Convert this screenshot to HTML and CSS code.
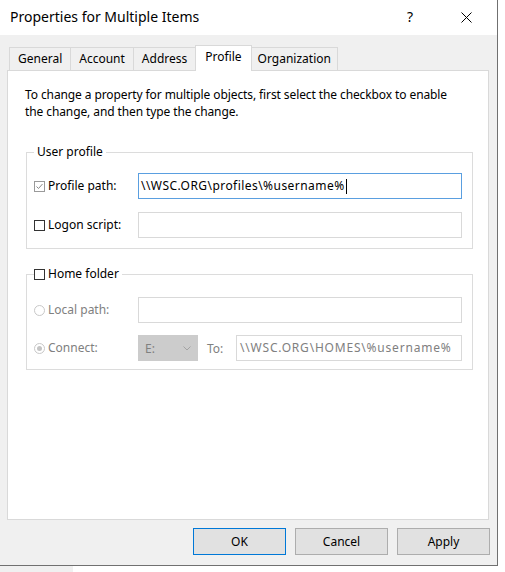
FILE: index.html
```html
<!DOCTYPE html>
<html lang="en">
<head>
<meta charset="utf-8">
<title>Properties for Multiple Items</title>
<link rel="stylesheet" href="styles.css">
</head>
<body>
<div class="window">
  <div class="titlebar">
    <span class="title">Properties for Multiple Items</span>
    <span class="help">?</span>
    <span class="close">
      <svg width="11" height="11" viewBox="0 0 11 11"><path d="M0.5 0.5 L10.5 10.5 M10.5 0.5 L0.5 10.5" stroke="#000" stroke-width="1" fill="none"/></svg>
    </span>
  </div>

  <div class="tabs">
    <div class="tab">General</div>
    <div class="tab">Account</div>
    <div class="tab">Address</div>
    <div class="tab tab--active">Profile</div>
    <div class="tab tab--narrow">Organization</div>
  </div>

  <div class="panel">
    <p class="desc">To change a property for multiple objects, first select the checkbox to enable<br>the change, and then type the change.</p>

    <fieldset class="group group--user">
      <legend class="group-title">User profile</legend>
      <div class="row">
        <label class="field-label">
          <span class="check check--on"><svg width="9" height="9" viewBox="0 0 9 9"><path d="M1.5 4.5 L3.5 6.5 L7.5 2" stroke="#8a8a8a" stroke-width="1" fill="none"/></svg></span>
          Profile path:
        </label>
        <div class="textbox textbox--focus">\\WSC.ORG\profiles\%username%<span class="caret"></span></div>
      </div>
      <div class="row">
        <label class="field-label">
          <span class="check"></span>
          Logon script:
        </label>
        <div class="textbox"></div>
      </div>
    </fieldset>

    <fieldset class="group group--home">
      <legend class="group-title group-title--check"><span class="check"></span>Home folder</legend>
      <div class="row">
        <label class="field-label field-label--disabled">
          <span class="radio"></span>
          Local path:
        </label>
        <div class="textbox"></div>
      </div>
      <div class="row row--tight">
        <label class="field-label field-label--disabled">
          <span class="radio radio--on"></span>
          Connect:
        </label>
        <div class="combo">
          <span>E:</span>
          <svg width="8" height="5" viewBox="0 0 8 5"><path d="M0.5 0.5 L4 4 L7.5 0.5" stroke="#a3a3a3" stroke-width="1" fill="none"/></svg>
        </div>
        <span class="to">To:</span>
        <div class="textbox textbox--disabled">\\WSC.ORG\HOMES\%username%</div>
      </div>
    </fieldset>
  </div>

  <div class="buttons">
    <button class="btn btn--default">OK</button>
    <button class="btn">Cancel</button>
    <button class="btn">Apply</button>
  </div>
</div>
<div class="stub"></div>
</body>
</html>
```

FILE: styles.css
```css
html, body {
  margin: 0;
  padding: 0;
}

body {
  width: 505px;
  height: 572px;
  overflow: hidden;
  background: #fff;
  color: #000;
  font-family: "Noto Sans", "Open Sans", sans-serif;
  font-size: 12px;
}

.window {
  width: 497px;
  height: 565px;
  background: #f0f0f0;
  border-right: 1px solid #707070;
  border-bottom: 1px solid #707070;
  display: flex;
  flex-direction: column;
}

/* title bar */
.titlebar {
  flex: none;
  height: 35px;
  background: #fff;
  display: flex;
  align-items: center;
  padding: 0 25px 0 10px;
}

.title {
  font-size: 14px;
  line-height: 16px;
  margin-top: -1px;
}

.help {
  margin-left: auto;
  width: 14px;
  text-align: center;
  font-size: 14px;
  line-height: 16px;
  margin-top: -1px;
}

.close {
  margin-left: 44px;
  width: 11px;
  height: 11px;
  display: flex;
}

/* tabs */
.tabs {
  flex: none;
  height: 35px;
  display: flex;
  align-items: flex-end;
  padding-left: 9px;
}

.tab {
  box-sizing: border-box;
  height: 23px;
  padding: 0 8px;
  border: 1px solid #d9d9d9;
  border-bottom: 0;
  background: #f0f0f0;
  display: flex;
  align-items: center;
  line-height: 16px;
}

.tab + .tab {
  margin-left: -1px;
}

.tab--narrow {
  padding: 0 6px;
}

.tab.tab--active {
  height: 26px;
  margin-bottom: -1px;
  padding: 0 9px 3px;
  background: #fff;
  position: relative;
  z-index: 1;
}

/* panel */
.panel {
  flex: 1;
  min-height: 0;
  margin: 0 8px 0 7px;
  background: #fff;
  border: 1px solid #d9d9d9;
  padding: 15px 15px 0 17px;
}

.desc {
  margin: 0;
  line-height: 17px;
  letter-spacing: -0.1px;
}

.group {
  margin: 0 0 0 1px;
  padding: 13px 10px 10px 7px;
  border: 1px solid #dcdcdc;
  min-width: 0;
}

.group--user {
  margin-top: 24px;
}

.group--home {
  margin-top: 17px;
  padding-top: 15px;
  padding-bottom: 8px;
}

.group-title {
  padding: 0 3px;
  line-height: 16px;
}

.group-title--check {
  padding: 0 3px 0 0;
  display: flex;
  align-items: center;
  gap: 3px;
}

.row {
  display: flex;
  align-items: center;
  height: 26px;
}

.row + .row {
  margin-top: 13px;
}

.row.row--tight {
  margin-top: 12px;
}

.field-label {
  flex: none;
  width: 104px;
  display: flex;
  align-items: center;
  gap: 3px;
  line-height: 16px;
}

.field-label--disabled {
  color: #808080;
}

.check {
  flex: none;
  box-sizing: border-box;
  width: 11px;
  height: 11px;
  border: 1px solid #333;
  background: #fff;
  display: flex;
  align-items: center;
  justify-content: center;
}

.check--on {
  border-color: #9a9a9a;
}

.radio {
  flex: none;
  box-sizing: border-box;
  width: 11px;
  height: 11px;
  border: 1px solid #c8c8c8;
  border-radius: 50%;
  background: #fff;
  display: flex;
  align-items: center;
  justify-content: center;
}

.radio--on::after {
  content: "";
  width: 5px;
  height: 5px;
  border-radius: 50%;
  background: #c4c4c4;
}

.textbox {
  flex: 1;
  min-width: 0;
  box-sizing: border-box;
  height: 26px;
  border: 1px solid #d9d9d9;
  background: #fff;
  padding: 0 2px;
  display: flex;
  align-items: center;
  white-space: nowrap;
  overflow: hidden;
  line-height: 16px;
  letter-spacing: 0.45px;
}

.textbox--focus {
  border-color: #5a9fe0;
}

.textbox--disabled {
  color: #808080;
  padding-left: 3px;
  letter-spacing: 0.8px;
}

.caret {
  width: 1px;
  height: 15px;
  background: #000;
  margin-left: 1px;
}

.combo {
  flex: none;
  box-sizing: border-box;
  width: 60px;
  height: 26px;
  background: #cccccc;
  color: #808080;
  display: flex;
  align-items: center;
  justify-content: space-between;
  padding: 0 7px 0 7px;
}

.to {
  flex: none;
  width: 29px;
  margin-left: 9px;
  color: #808080;
}

/* buttons */
.buttons {
  flex: none;
  box-sizing: border-box;
  height: 45px;
  display: flex;
  justify-content: flex-end;
  align-items: flex-start;
  gap: 9px;
  padding: 8px 7px 0 0;
}

.btn {
  box-sizing: border-box;
  width: 93px;
  height: 27px;
  padding: 0;
  border: 1px solid #adadad;
  background: #e1e1e1;
  color: #000;
  font-family: inherit;
  font-size: 12px;
  line-height: 16px;
}

.btn--default {
  border-color: #0078d7;
}

.stub {
  width: 73px;
  height: 6px;
  background: #f0f0f0;
}
```
